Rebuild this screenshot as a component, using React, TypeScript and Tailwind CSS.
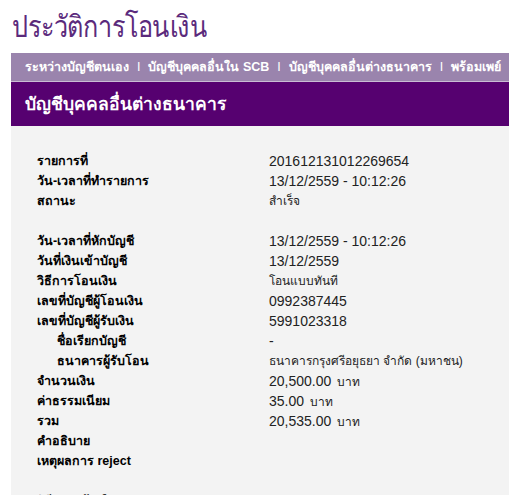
import React from 'react';

type Row = { label?: string; value?: string; unit?: string; indent?: boolean; thai?: boolean };

const groups: Row[][] = [
  [
    { label: 'รายการที่', value: '201612131012269654' },
    { label: 'วัน-เวลาที่ทำรายการ', value: '13/12/2559 - 10:12:26' },
    { label: 'สถานะ', value: 'สำเร็จ', thai: true },
  ],
  [
    { label: 'วัน-เวลาที่หักบัญชี', value: '13/12/2559 - 10:12:26' },
    { label: 'วันที่เงินเข้าบัญชี', value: '13/12/2559' },
    { label: 'วิธีการโอนเงิน', value: 'โอนแบบทันที', thai: true },
    { label: 'เลขที่บัญชีผู้โอนเงิน', value: '0992387445' },
    { label: 'เลขที่บัญชีผู้รับเงิน', value: '5991023318' },
    { label: 'ชื่อเรียกบัญชี', value: '-', indent: true },
    { label: 'ธนาคารผู้รับโอน', value: 'ธนาคารกรุงศรีอยุธยา จำกัด (มหาชน)', indent: true, thai: true },
    { label: 'จำนวนเงิน', value: '20,500.00', unit: 'บาท' },
    { label: 'ค่าธรรมเนียม', value: '35.00', unit: 'บาท' },
    { label: 'รวม', value: '20,535.00', unit: 'บาท' },
    { label: 'คำอธิบาย' },
    { label: 'เหตุผลการ reject' },
  ],
  [{ label: 'วิธีการแจ้งเตือน' }],
];

const navItems = ['ระหว่างบัญชีตนเอง', 'บัญชีบุคคลอื่นใน SCB', 'บัญชีบุคคลอื่นต่างธนาคาร', 'พร้อมเพย์'];

function DetailRow({ row }: { row: Row }) {
  return (
    <div className="flex h-[20px] items-center">
      <div
        className={`w-[232px] shrink-0 text-[12.5px] font-bold text-black ${row.indent ? 'pl-[20px]' : ''}`}
      >
        {row.label}
      </div>
      <div className={`${row.thai ? 'text-[12px]' : 'text-[14px]'} text-[#222]`}>
        {row.value}
        {row.unit && <span className="ml-[6px] text-[12px]">{row.unit}</span>}
      </div>
    </div>
  );
}

export default function App() {
  return (
    <div
      className="h-[495px] w-[509px] overflow-hidden bg-white"
      style={{ fontFamily: '"Liberation Sans", Tahoma, sans-serif' }}
    >
      <div className="h-[53px] pl-[12px] pt-[7px]">
        <h1 className="inline-block origin-left scale-x-[0.84] whitespace-nowrap text-[30px] leading-[40px] tracking-[-0.5px] text-[#5b2a7c]">
          ประวัติการโอนเงิน
        </h1>
      </div>
      <div className="ml-[11px]">
        <div className="flex h-[29px] items-center whitespace-nowrap border-b border-[#c9bcd4] bg-[#9a84ad] pl-[14px] text-[12.5px] font-bold text-white">
          {navItems.map((item, i) => (
            <span key={item} className="flex items-center">
              {item}
              {i < navItems.length - 1 && <span className="mx-[8px] font-normal">I</span>}
            </span>
          ))}
        </div>
        <div className="flex h-[44px] items-center bg-[#560170] pl-[14px] text-[17.5px] font-bold text-white">
          บัญชีบุคคลอื่นต่างธนาคาร
        </div>
        <div className="flex h-[400px] flex-col gap-[20px] bg-[#f3f3f3] pl-[26px] pt-[25px]">
          {groups.map((g, gi) => (
            <div key={gi}>
              {g.map((r, ri) => (
                <DetailRow key={ri} row={r} />
              ))}
            </div>
          ))}
        </div>
      </div>
    </div>
  );
}
